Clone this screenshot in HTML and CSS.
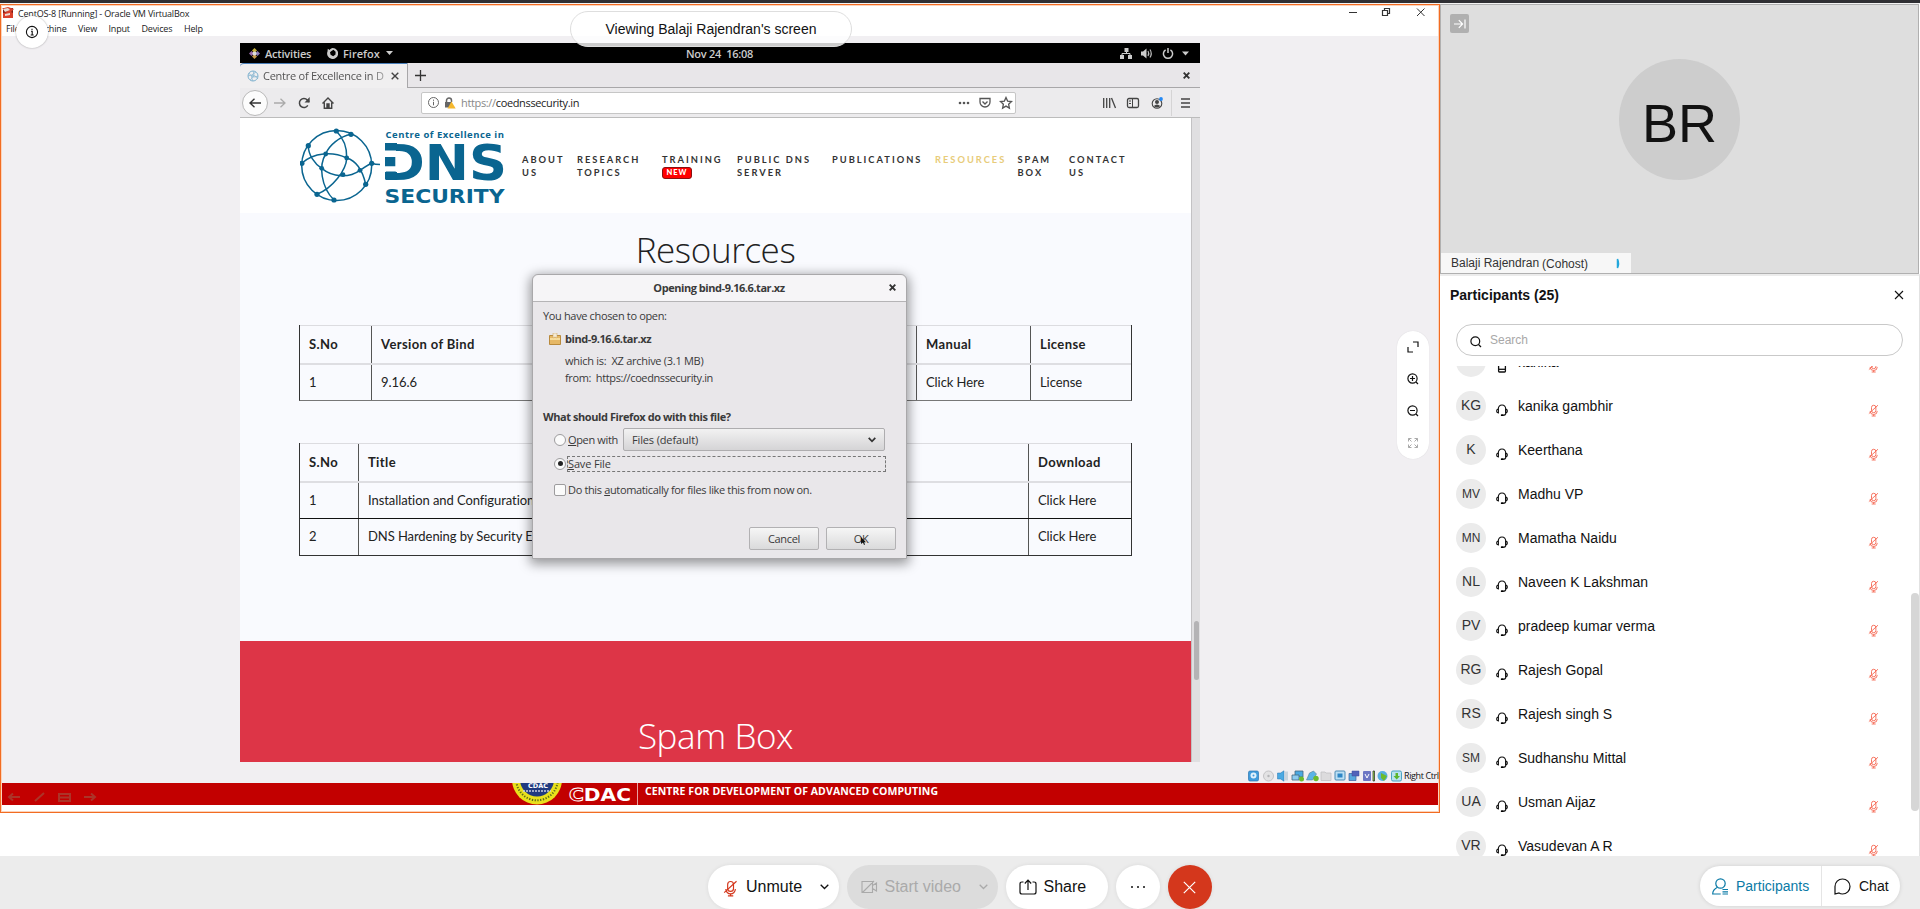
FILE: index.html
```html
<!DOCTYPE html>
<html lang="en">
<head>
<meta charset="utf-8">
<title>Meeting</title>
<link rel="stylesheet" href="styles.css">
</head>
<body>
<svg width="0" height="0" class="defs">
  <symbol id="mic" viewBox="0 0 12 14"><g fill="none" stroke="currentColor" stroke-width="1"><rect x="4" y="1" width="5" height="8.5" rx="2.5"/><path d="M2.4 7.5a4.1 4.1 0 0 0 8.2 0M6.5 11.500v1.800M4.200 13.300h4.600M1 10.500 11.600.8"/></g></symbol>
  <symbol id="headset" viewBox="0 0 12 13"><g fill="none" stroke="#111" stroke-width="1.100"><path d="M2.200 5.200C2.400 2.400 4 1 6 1s3.600 1.400 3.800 4.200v4c0 1.400-1 2-2.800 2"/><path d="M2.400 5C.9 5.200.6 6 .6 7s.6 1.900 1.800 1.900zM9.600 5c1.500.2 1.800 1 1.800 2s-.6 1.900-1.800 1.900z"/></g><rect x="4.800" y="10.200" width="2.800" height="1.900" rx=".9"/></symbol>
</svg>
<div class="topline"></div>
<main class="main">
  <section class="share">
    <div class="vb-head">
      <div class="vb-title">
        <svg width="12" height="12" viewBox="0 0 12 12"><path d="M1 1h10v10H1z" fill="#7c1a12"/><path d="M0 1.500 6 0l6 2-3 3 2 1v5H1V6l4-1z" fill="#d8402b"/><path d="m1 2 5-1 2 2-5 2zM3 7l5-1v2L3 9z" fill="#e9dcd6"/></svg>
        <span class="t">CentOS-8 [Running] - Oracle VM VirtualBox</span>
        <svg class="winctl" width="78" height="12" viewBox="0 0 78 12" fill="none" stroke="#333"><path d="M1 6.500h8"/><path d="M34.500 4.500h5v5h-5zM36.500 4.500v-2h5v5h-2" stroke-width="1.200"/><path d="m69 2.500 7.500 7.500m0-7.500L69 10"/></svg>
      </div>
      <div class="vb-menu"><span>File</span><span>Machine</span><span>View</span><span>Input</span><span>Devices</span><span>Help</span></div>
    </div>
    <div class="guest">
      <div class="gnome">
        <svg width="11" height="11" viewBox="0 0 11 11"><path d="M5.500 0 8 2.500 5.500 5 3 2.500z" fill="#c9b23d"/><path d="M11 5.500 8.500 8 6 5.500 8.500 3z" fill="#8d7bb8"/><path d="M5.500 11 3 8.500 5.500 6 8 8.500z" fill="#c99a4a"/><path d="M0 5.500 2.500 3 5 5.500 2.500 8z" fill="#9a6ca8"/><circle cx="5.500" cy="5.500" r="2" fill="#ddd"/></svg>
        <span class="t g-act">Activities</span>
        <svg width="11" height="11" viewBox="0 0 11 11"><path d="M5.800 0a5.500 5.500 0 1 1-5.300 3.500L.8.800l1.800 1.300C3.300 1 4.300.4 5.800 0zM4.500 3 3 4.200l.6 2.600 2.600 1.400 2.300-1.700.1-2.700L6.500 1.800z" fill="#ccc" fill-rule="evenodd"/></svg>
        <span class="t g-ff">Firefox</span>
        <svg width="7" height="4"><path d="M0 0h7L3.500 4z" fill="#ccc"/></svg>
        <span class="t g-time">Nov 24&nbsp; 16:08</span>
        <svg class="g-right" width="70" height="13" viewBox="0 0 70 13" fill="#ccc"><path d="M4.500 1h4v4h-4zM0 8h4v4H0zM8 8h4v4H8z"/><path d="M6.500 5v1.500M2 8.500v-2h8v2" fill="none" stroke="#ccc"/><path d="M21 4.500h2L26.500 1.500v10L23 8.500h-2z"/><path d="M28 4q1.500 2.500 0 5M30 2.500q2.500 4 0 8" fill="none" stroke="#bbb" stroke-width="1.200"/><path d="M45.600 2.800a4.600 4.600 0 1 0 4.800 0M48 1v5" fill="none" stroke="#ccc" stroke-width="1.500"/><path d="M62 4.500h7l-3.500 4z"/></svg>
      </div>
      <div class="tabs">
        <div class="tab">
          <svg width="12" height="12" viewBox="0 0 12 12" fill="none" stroke="#7fb2cf"><circle cx="6" cy="6" r="5"/><path d="M6 1q3 5-3 9M9 2Q2 5 6 11M1 6q6-3 10 3M2 3q3 6 9 3" stroke-width=".7"/></svg>
          <span class="t tabtext">Centre of Excellence in D</span>
          <svg width="8" height="8" stroke="#444" stroke-width="1.400"><path d="m.7.7 6.600 6.600m0-6.600L.7 7.300"/></svg>
        </div>
        <svg class="plus" width="11" height="11" stroke="#333" stroke-width="1.300"><path d="M5.500 0v11M0 5.500h11"/></svg>
        <svg class="winx" width="7" height="7" stroke="#333" stroke-width="1.900"><path d="m.7.7 5.600 5.600m0-5.600L.7 6.300"/></svg>
      </div>
      <div class="toolbar">
        <span class="back"><svg width="12" height="10" fill="none" stroke="#333" stroke-width="1.400"><path d="M12 5H1M5.500.7 1 5l4.500 4.300"/></svg></span>
        <svg class="fwd" width="12" height="10" fill="none" stroke="#aaa" stroke-width="1.300"><path d="M0 5h11M6.500.7 11 5 6.500 9.300"/></svg>
        <svg class="reload" width="12" height="12" fill="none" stroke="#444" stroke-width="1.500"><path d="M9.800 8.300A4.500 4.500 0 1 1 9.300 3L11 5"/><path d="M11.700 0v5.500H6.500z" fill="#444" stroke="none"/></svg>
        <svg class="home" width="12" height="12" fill="none" stroke="#444" stroke-width="1.400"><path d="m.5 6.500 5.500-5.500 5.500 5.500M2.300 5.500v5.700h7.400V5.500"/><path d="M5 11V7h2v4z" fill="#444"/></svg>
        <div class="url">
          <svg width="11" height="11" fill="none" stroke="#666"><circle cx="5.500" cy="5.500" r="5"/><path d="M5.500 4.800v3.500M5.500 2.600v1.200"/></svg>
          <svg class="lock" width="12" height="12"><path d="M2.500 5V3.500a2.500 2.500 0 0 1 5 0V5" fill="none" stroke="#666" stroke-width="1.500"/><path d="M1 5h6v5.500H1z" fill="#666"/><path d="m7.500 4.500 4.200 7H3.500z" fill="#f5b82e"/></svg>
          <span class="t urltext"><i>https://</i>coednssecurity.in</span>
          <svg class="url-r" width="60" height="14" fill="none" stroke="#555" stroke-width="1.300"><g fill="#555" stroke="none"><circle cx="2" cy="7" r="1.300"/><circle cx="6" cy="7" r="1.300"/><circle cx="10" cy="7" r="1.300"/></g><path d="M22 2.500h10v3.500a5 5 0 0 1-10 0zM24.500 5.500 27 8l2.500-2.500M48 1.500l1.600 3.600 3.900.4-2.900 2.700.8 3.900L48 10.100l-3.400 2 .8-3.900-2.900-2.700 3.900-.4z"/></svg>
        </div>
        <svg class="tb-r" width="90" height="26" fill="none" stroke="#444" stroke-width="1.300"><path d="M.7 8v10M3.700 8v10M6.700 8v10M8.500 8l4 10"/><rect x="24.500" y="8.500" width="11" height="9" rx="1.500"/><path d="M29.500 8.500v9M26 11h2M26 13.500h2" stroke-width="1"/><circle cx="54" cy="13.500" r="4.800" stroke-width="1.100"/><circle cx="54" cy="12" r="2" fill="#444" stroke="none"/><path d="M50.800 16q3.200-3 6.400 0-3.200 3-6.400 0z" fill="#444" stroke="none"/><circle cx="58" cy="9" r="1.900" fill="#2489f5" stroke="none"/><path d="M68.500 0v26" stroke="#d5d4d5" stroke-width="1"/><path d="M78 9h9M78 13h9M78 17h9"/></svg>
      </div>
      <div class="page">
        <div class="content">
          <header class="site">
            <svg class="logo" width="206" height="82" viewBox="300 126 206 82" fill="none" stroke="#0a6590">
              <circle cx="336.700" cy="165.500" r="35" stroke-width="1.500"/>
              <path stroke-width="1.500" d="M336.300 131c7 7 10.800 17 10.400 27-.3 12-14 30-29.700 36.300M351 134.300c-11 2-22 11-25.300 19.700-7 11-5 33 8.300 46M301.700 163.300c12-11 31-12 45-5.300 10 3 16 13 19 26.300M308.300 145.700c0 9 6 18 13.400 22.600 11 9 27 10 38.300 2 6-4 9-6 11.700-7 4 1.500 9 1.500 14 1"/>
              <g fill="#0a6590" stroke="none"><circle cx="336.300" cy="131" r="2.600"/><circle cx="351" cy="134.300" r="2.600"/><circle cx="308.300" cy="145.700" r="2.600"/><circle cx="301.900" cy="163.300" r="2.600"/><circle cx="325.700" cy="154" r="2.400"/><circle cx="346.700" cy="158" r="2.400"/><circle cx="321.700" cy="168.300" r="2.400"/><circle cx="360" cy="170.300" r="2.400"/><circle cx="371.700" cy="163.300" r="2.600"/><circle cx="343" cy="174.700" r="2.400"/><circle cx="365.700" cy="184.300" r="2.600"/><circle cx="317" cy="194.300" r="2.600"/><circle cx="334" cy="200" r="2.600"/>
              <text class="l1" x="385.500" y="137.500" textLength="118.500">Centre of Excellence in</text>
              <text class="l2" x="381" y="179.500" textLength="126" lengthAdjust="spacingAndGlyphs">DNS</text>
              <path fill="#fff" d="M380 150h16v21.500h-16z"/><path d="M385 157h10.300v9.300H385zM385 143h12v7.500h-12zM385 172h12v7.500h-12z"/>
              <text class="l3" x="384.500" y="203" textLength="120" lengthAdjust="spacingAndGlyphs">SECURITY</text></g>
            </svg>
            <nav class="nav"><a>ABOUT<br>US</a><a>RESEARCH<br>TOPICS</a><a>TRAINING<br><b>NEW</b></a><a>PUBLIC DNS<br>SERVER</a><a>PUBLICATIONS</a><a class="on">RESOURCES</a><a>SPAM<br>BOX</a><a>CONTACT<br>US</a></nav>
          </header>
          <section class="res">
            <h1>Resources</h1>
            <div class="tbl t1">
              <div class="row head"><div>S.No</div><div>Version of Bind</div><div>Manual</div><div>License</div></div>
              <div class="row"><div>1</div><div>9.16.6</div><div>Click Here</div><div>License</div></div>
            </div>
            <div class="tbl t2">
              <div class="row head"><div>S.No</div><div>Title</div><div>Download</div></div>
              <div class="row"><div>1</div><div>Installation and Configuration</div><div>Click Here</div></div>
              <div class="row"><div>2</div><div>DNS Hardening by Security Engineers</div><div>Click Here</div></div>
            </div>
          </section>
          <section class="spam"><h1>Spam Box</h1></section>
        </div>
        <div class="sb"><i></i></div>
      </div>
      <div class="dialog">
        <div class="d-title"><span>Opening bind-9.16.6.tar.xz</span><svg width="7" height="7" stroke="#333" stroke-width="1.900"><path d="m.7.7 5.600 5.600m0-5.600L.7 6.300"/></svg></div>
        <div class="d-body">
          <p>You have chosen to open:</p>
          <p class="p2"><svg width="12" height="12"><path d="M.5 2.500h11v9H.5z" fill="#e6b866" stroke="#b98a3c"/><path d="M1 6h10" stroke="#f6dc9c" stroke-width="2"/><path d="M4 0h4v5L6 4 4 5z" fill="#f3ead6" stroke="#c9a05a" stroke-width=".5"/></svg><b>bind-9.16.6.tar.xz</b></p>
          <p class="p3">which is:&nbsp; XZ archive (3.1 MB)</p>
          <p class="p4">from:&nbsp; https://coednssecurity.in</p>
          <p class="p5"><b>What should Firefox do with this file?</b></p>
          <div class="p6"><i class="radio"></i><span><u>O</u>pen with</span><div class="select"><span>Files (default)</span><svg width="8" height="6" fill="none" stroke="#333" stroke-width="1.700"><path d="m.7.8 3.300 3.500L7.300.8"/></svg></div></div>
          <div class="p7"><i class="radio sel"></i><div class="focus"><u>S</u>ave File</div></div>
          <div class="p8"><i class="check"></i><span>Do this <u>a</u>utomatically for files like this from now on.</span></div>
          <div class="p9"><div class="btn">Cancel</div><div class="btn">OK<svg class="cursor" width="8" height="10"><path d="M1 0v7l2-1.500L4 8l1-.5-1-2.300h2z" fill="#111"/></svg></div></div>
        </div>
      </div>
    </div>
    <div class="status">
      <svg width="156" height="12" viewBox="0 0 156 12">
        <rect x=".5" y="1" width="10" height="10" rx="1.500" fill="#3f9bdc" stroke="#2874b0" stroke-width=".7"/><circle cx="5.500" cy="5.500" r="3" fill="#dff0fb"/><circle cx="5.500" cy="5.500" r="1" fill="#3f9bdc"/>
        <circle cx="20.500" cy="6" r="5" fill="#e3e2e4" stroke="#c4c3c6"/><circle cx="20.500" cy="6" r="1.200" fill="#b5b5b8"/>
        <path d="M29.500 3h3L36 .8v10.400L32.500 9h-3z" fill="#4ba9e2" stroke="#2874b0" stroke-width=".5"/><path d="M37 1.500h3v9h-3z" fill="#c9d3dc"/>
        <path d="M47 1h8v6h-8z" fill="#4ba9e2" stroke="#44687f" stroke-width=".8"/><path d="M44 5h7v5h-7z" fill="#8ccbf0" stroke="#44687f" stroke-width=".8"/><circle cx="53.500" cy="9" r="2.500" fill="#6dbb2d"/>
        <path d="m58.500 10 3-7 4-2 3 3-4 6z" fill="#5bb4e6" stroke="#5a7f97" stroke-width=".6"/><circle cx="68" cy="8.500" r="2.700" fill="#6dbb2d"/>
        <path d="M73 2h4l1 1h5v7.500H73z" fill="#dcdbdd" stroke="#c2c1c4" stroke-width=".8"/>
        <rect x="87" y="1" width="10" height="9" rx="1" fill="#bcdff4" stroke="#4a8ab4"/><path d="M89.500 3.500h5v4h-5z" fill="#2d86c6"/>
        <path d="M101 3.500h7v7h-7z" fill="#58a9dd" stroke="#3c5e9e" stroke-width=".7"/><path d="M104 1h7v5h-7z" fill="#5263b9" stroke="#3c4e9e" stroke-width=".5"/>
        <rect x="115" y="1" width="8" height="10" rx="1" fill="#6d76c4"/><path d="m117 4 2 4 2-4" stroke="#fff" fill="none"/><path d="M125 1h1.500v10H125z" fill="#9be04c" stroke="#222" stroke-width=".7"/>
        <circle cx="134.500" cy="6" r="5" fill="#58aee0"/><path d="m133 3 6 3-3 5-3-3z" fill="#6dbb2d"/>
        <rect x="143.500" y="1" width="10" height="10" rx="1.500" fill="#b8e2ee" stroke="#4aa3c4"/><path d="M147.500 3h2.500v3h2l-3.300 3.500L145.500 6h2z" fill="#5cb52c"/>
      </svg>
      <span>Right Ctrl</span>
    </div>
    <div class="cdac">
      <svg class="tools" width="90" height="12" fill="none" stroke="#a34a3a" stroke-width="2" opacity=".7"><path d="M13 6H3M6 2.500 2 6l4 3.500M28 10l9-8M52 3h11v7H52zM52 6.500h11M77 6h10M84 2.500 88 6l-4 3.500"/></svg>
      <svg class="emblem" width="52" height="22" viewBox="0 0 52 22"><circle cx="26" cy="-3.500" r="25" fill="#e9e01c"/><circle cx="26" cy="-3.500" r="20.800" fill="none" stroke="#5c6b1a" stroke-width="2" stroke-dasharray="1.300 1.500"/><circle cx="26" cy="-3.500" r="17" fill="#213a80"/><text x="17" y="5" class="e1">CDAC</text><path d="M12 8h28" stroke="#c8cbe0" stroke-width="1.500" stroke-dasharray="2 1"/></svg>
      <svg class="cd" width="66" height="18"><text x="2" y="15" textLength="62" lengthAdjust="spacingAndGlyphs"><tspan class="c0">C</tspan>DAC</text></svg>
      <span class="t cdtext">CENTRE FOR DEVELOPMENT OF ADVANCED COMPUTING</span>
    </div>
    <div class="viewing">Viewing Balaji Rajendran's screen</div>
    <div class="info"><svg width="14" height="14" fill="none" stroke="#111" stroke-width="1.100"><circle cx="7" cy="7" r="5.600"/><path d="M6 6.200h1.200V10M5.700 10h3M7 3.700v1.200"/></svg></div>
    <div class="zoomer">
      <svg width="12" height="12" fill="none" stroke="#111" stroke-width="1.200"><path d="M6 1h5v5M1 6v5h5"/></svg>
      <svg width="12" height="12" fill="none" stroke="#111" stroke-width="1.200"><circle cx="5.500" cy="5.500" r="4.600"/><path d="M3 5.500h5M5.500 3v5M9 9l2 2"/></svg>
      <svg width="12" height="12" fill="none" stroke="#111" stroke-width="1.200"><circle cx="5.500" cy="5.500" r="4.600"/><path d="M3 5.500h5M9 9l2 2"/></svg>
      <svg width="12" height="12" fill="none" stroke="#aaa"><path d="M1.500 4.500v-3h3M1.500 1.500l3 3M7.500 1.500h3v3M10.500 1.500l-3 3M1.500 7.500v3h3M1.500 10.500l3-3M10.500 7.500v3h-3M10.500 10.500l-3-3"/></svg>
    </div>
  </section>
  <aside class="side">
    <div class="tile">
      <span class="collapse"><svg width="12" height="10" fill="none" stroke="#fff" stroke-width="1.200"><path d="M0 5h8.500M4.800 1.200 8.600 5 4.800 8.800M11 .5v9"/></svg></span>
      <div class="big">BR</div>
      <div class="who"><span>Balaji Rajendran</span><em>(Cohost)</em><svg width="5" height="11"><path d="M1.500 1q2 4.500 0 9z" fill="#22a7dc" stroke="#22a7dc" stroke-width="1.500"/></svg></div>
    </div>
    <div class="panel">
      <div class="p-head"><b>Participants (25)</b><svg width="10" height="10" stroke="#111" stroke-width="1.100"><path d="m1 1 8 8m0-8L1 9"/></svg></div>
      <div class="search"><svg width="12" height="12" fill="none" stroke="#111" stroke-width="1.200"><circle cx="5.300" cy="5.300" r="4.400"/><path d="m8.500 8.500 2.500 2.500"/></svg>Search</div>
      <div class="list">
        <div class="scroll">
          <div class="pt"><i></i><svg width="10" height="13" viewBox="0 0 10 13" fill="none" stroke="#111" stroke-width="1.300"><rect x="1.600" y="1" width="6.800" height="11" rx=".8"/><path d="M1.600 9.300h6.800"/></svg><span>kanika</span><svg class="m"><use href="#mic"/></svg></div>
          <div class="pt"><i>KG</i><svg><use href="#headset"/></svg><span>kanika gambhir</span><svg class="m"><use href="#mic"/></svg></div>
          <div class="pt"><i>K</i><svg><use href="#headset"/></svg><span>Keerthana</span><svg class="m"><use href="#mic"/></svg></div>
          <div class="pt"><i class="s">MV</i><svg><use href="#headset"/></svg><span>Madhu VP</span><svg class="m"><use href="#mic"/></svg></div>
          <div class="pt"><i class="s">MN</i><svg><use href="#headset"/></svg><span>Mamatha Naidu</span><svg class="m"><use href="#mic"/></svg></div>
          <div class="pt"><i>NL</i><svg><use href="#headset"/></svg><span>Naveen K Lakshman</span><svg class="m"><use href="#mic"/></svg></div>
          <div class="pt"><i>PV</i><svg><use href="#headset"/></svg><span>pradeep kumar verma</span><svg class="m"><use href="#mic"/></svg></div>
          <div class="pt"><i>RG</i><svg><use href="#headset"/></svg><span>Rajesh Gopal</span><svg class="m"><use href="#mic"/></svg></div>
          <div class="pt"><i>RS</i><svg><use href="#headset"/></svg><span>Rajesh singh S</span><svg class="m"><use href="#mic"/></svg></div>
          <div class="pt"><i class="s">SM</i><svg><use href="#headset"/></svg><span>Sudhanshu Mittal</span><svg class="m"><use href="#mic"/></svg></div>
          <div class="pt"><i>UA</i><svg><use href="#headset"/></svg><span>Usman Aijaz</span><svg class="m"><use href="#mic"/></svg></div>
          <div class="pt"><i>VR</i><svg><use href="#headset"/></svg><span>Vasudevan A R</span><svg class="m"><use href="#mic"/></svg></div>
        </div>
        <div class="thumb"></div>
      </div>
    </div>
  </aside>
</main>
<footer class="bar">
  <div class="ctl">
    <div class="pill unmute"><svg class="mi"><use href="#mic"/></svg><span>Unmute</span><svg class="chev" width="9" height="6" fill="none" stroke="#111" stroke-width="1.300"><path d="m.7.7 3.800 3.800L8.300.7"/></svg></div>
    <div class="pill video"><svg class="cam" width="17" height="14" fill="none" stroke="#aaa" stroke-width="1.100"><path d="M1 1.500h10.500V12.500H1zM1.500 12.500 13 1M11.500 5.500l4-2.500v8l-4-2.500"/></svg><span>Start video</span><svg class="chev" width="9" height="6" fill="none" stroke="#aaa" stroke-width="1.300"><path d="m.7.7 3.800 3.800L8.300.7"/></svg></div>
    <div class="pill sharebtn"><svg width="18" height="16" fill="none" stroke="#111" stroke-width="1.200"><path d="M4.500 3H3Q1 3 1 5v8q0 2 2 2h12q2 0 2-2V5q0-2-2-2h-1.500M9 11V1.500M5.800 4.500 9 1.200l3.200 3.300"/></svg><span>Share</span></div>
    <div class="pill round"><svg width="16" height="4" fill="#111"><circle cx="2" cy="2" r="1"/><circle cx="8" cy="2" r="1"/><circle cx="14" cy="2" r="1"/></svg></div>
    <div class="pill round end"><svg width="13" height="13" stroke="#fff" stroke-width="1.200"><path d="m.8.8 11.400 11.400m0-11.400L.8 12.200"/></svg></div>
  </div>
  <div class="tabsr">
    <div class="pp"><svg width="16" height="17" fill="none" stroke="#0a7aa6" stroke-width="1.200"><circle cx="8.500" cy="5.500" r="4.700"/><path d="M5.500 9.200Q.7 11.500.7 16h8M10.500 11.500h5.500M10.500 13.800h5.500M10.500 16h5.500"/></svg><span>Participants</span></div>
    <div class="ch"><svg width="17" height="17" fill="none" stroke="#111" stroke-width="1.200"><path d="M1 16V8.500A7.500 7.500 0 1 1 8.500 16q-2 0-3.500-1z"/></svg><span>Chat</span></div>
  </div>
</footer>
</body>
</html>
```
FILE: styles.css
```css
* { box-sizing: border-box; }
body { margin: 0; width: 1920px; height: 909px; overflow: hidden; background: #fff; font-family: "Liberation Sans", Arial, sans-serif; color: #121212; display: flex; flex-direction: column; }
svg { flex: none; display: block; }
p, h1 { margin: 0; font-weight: normal; }
.defs { position: absolute; }
.t { white-space: nowrap; }
.topline { height: 4px; background: #2f2f33; border-bottom: 1px solid #f4f4f4; flex: none; }
.main { height: 852px; display: grid; grid-template-columns: 1440px 480px; flex: none; }

/* shared screen */
.share { position: relative; height: 809px; border: 1px solid #f26c22; box-shadow: inset 0 0 0 1px #fbd3bb; background: #fff; overflow: hidden; display: flex; flex-direction: column; }
.share > * { position: relative; }
.share::before { content: ""; position: absolute; left: 1px; right: 1px; top: 31px; height: 747px; background: #f1eff2; }
.vb-head { height: 31px; font: 9px "Open Sans", sans-serif; color: #222; margin: 1px 1px 0; letter-spacing: -.18px; }
.vb-title { height: 14px; display: flex; align-items: center; gap: 4px; }
.winctl { margin-left: auto; margin-right: 12px; margin-top: -3px; }
.vb-menu { display: grid; grid-template-columns: 26px 46px 30.500px 33px 42.500px 40px; padding-left: 4px; line-height: 17px; }
.guest { position: relative; width: 960px; height: 719px; margin-left: 239px; margin-top: 6px; flex: none; font-family: "Open Sans", sans-serif; }
.gnome { height: 20px; background: #000; color: #ccc; display: flex; align-items: center; font-size: 11px; font-weight: 600; padding: 0 10px 0 9px; }
.g-act { margin-left: 5px; width: 62px; letter-spacing: -.2px; }
.g-ff { margin-left: 5px; width: 43px; }
.g-time { margin-left: 293px; letter-spacing: -.27px; }
.g-right { margin-left: auto; }
.tabs { height: 25px; background: #e8e6e9; display: flex; align-items: center; border-bottom: 1px solid #a8a7a9; }
.tab { width: 168px; height: 25px; background: #f0eff0; border-top: 1px solid #4a80bb; border-right: 1px solid #a8a7a9; border-radius: 4px 0 0 0; display: flex; align-items: center; padding-left: 7px; font-size: 11px; color: #555; }
.tabtext { margin-left: 4px; width: 128px; letter-spacing: -.25px; -webkit-mask-image: linear-gradient(90deg, #000 84%, transparent 104%); }
.plus { margin-left: 7px; }
.winx { margin-left: auto; margin-right: 10px; }
.toolbar { height: 30px; background: #ecebed; border-bottom: 1px solid #bcbcbc; display: flex; align-items: center; padding-left: 2px; }
.back { width: 26px; height: 26px; border-radius: 50%; border: 1px solid #b9b9b9; background: #fcfcfc; display: grid; place-items: center; }
.fwd { margin-left: 6px; }
.reload { margin-left: 12px; }
.home { margin-left: 12px; }
.url { margin-left: 87px; width: 595px; height: 22px; border: 1px solid #c6c6c6; border-radius: 2px; background: #fff; display: flex; align-items: center; padding-left: 6px; font-size: 11px; color: #222; }
.url i { font-style: normal; color: #888; }
.lock { margin-left: 5px; }
.urltext { margin-left: 5px; letter-spacing: -.35px; }
.url-r { margin-left: auto; margin-right: -3px; }
.tb-r { margin-left: 87px; }

/* web page inside the guest browser */
.page { height: 644px; display: grid; grid-template-columns: 951px 9px; }
.sb { background: #e0dfe1; border-left: 1px solid #c3c2c4; padding: 503px 1px 0 2px; }
.sb i { display: block; height: 59px; background: #b4b3b5; border-radius: 3px; width: 5px; }
.site { height: 95px; background: #fff; display: flex; }
.logo { margin: 8px 0 0 60px; }
.logo .l1 { font: 700 9.500px "Open Sans"; }
.logo .l2 { font: 700 50px "DejaVu Sans"; }
.logo .l3 { font: 700 19.500px "DejaVu Sans"; }
.nav { display: grid; grid-template-columns: 55px 85px 75px 95px 103px 82.500px 51.500px 80px; margin-left: 16px; padding-top: 34.500px; font: 700 9.300px/13.500px Lato, sans-serif; letter-spacing: 2px; color: #333; white-space: nowrap; }
.nav .on { color: #e8cc7a; }
.nav b { display: block; width: 30px; height: 12px; background: #f00; border: 1px solid #811; border-radius: 3px; color: #fff; font-size: 7.500px; line-height: 10px; letter-spacing: 1px; text-align: center; margin-top: .5px; }
.res { height: 428px; background: #f9fafe; padding: 13px 59px 0; color: #222; }
h1 { font: 300 35px/48px "Open Sans"; text-align: center; letter-spacing: -.4px; }
.tbl { width: 833px; border: solid #333; border-width: 0 1px 1px; font: 13px Lato, sans-serif; letter-spacing: -.07px; }
.t1 { margin-top: 51px; border-bottom: 1px solid #777; }
.t2 { margin-top: 42px; }
.row { display: grid; height: 37px; line-height: 34px; border-top: 2px solid #dedee2; overflow: hidden; }
.row.head { border-top: 1px solid #dcdce0; font-weight: 700; height: 38px; line-height: 37px; letter-spacing: .38px; }
.t2 .row:last-child { border-top: 1px solid #111; }
.row > div { padding-left: 9px; border-left: 1px solid #555; white-space: nowrap; overflow: hidden; }
.row > div:first-child { border-left: 0; }
.t1 .row { grid-template-columns: 71px 545px 114px 1fr; }
.t2 .row { grid-template-columns: 58px 670px 1fr; }
.spam { height: 121px; background: #dd3547; color: #fff; padding-top: 71px; }

/* download dialog */
.dialog { position: absolute; left: 292px; top: 231px; width: 375px; height: 285px; background: #e9e7ea; border: 1px solid #a9a8aa; border-radius: 6px 6px 0 0; box-shadow: 0 3px 12px 2px rgba(0,0,0,.4); font-size: 11px; color: #3a3a3a; white-space: nowrap; letter-spacing: -.35px; }
.dialog b { letter-spacing: -.43px; }
.d-title { height: 27px; border-bottom: 1px solid #b5b4b6; background: #f6f5f7; border-radius: 6px 6px 0 0; font-weight: 700; display: grid; grid-template-columns: 1fr 8px; align-items: center; padding: 0 9px 1px 16px; text-align: center; letter-spacing: -.45px; }
.d-body { padding: 6px 10px 0; line-height: 16px; display: flex; flex-direction: column; }
.p2 { display: flex; gap: 4px; padding-left: 6px; margin-top: 7px; align-items: center; height: 16px; }
.p3 { padding-left: 22px; margin-top: 6px; letter-spacing: -.28px; }
.p4 { padding-left: 22px; margin-top: 1px; letter-spacing: -.39px; }
.p5 { margin-top: 23px; }
.p6, .p7, .p8 { display: flex; align-items: center; padding-left: 11px; gap: 2px; }
.p6 { height: 23px; margin-top: 3px; }
.p7 { height: 17px; margin-top: 4px; gap: 1px; letter-spacing: -.15px; }
.p8 { height: 16px; margin-top: 10px; }
.radio, .check { width: 12px; height: 12px; border: 1px solid #9d9c9e; border-radius: 50%; background: #fbfbfb; display: grid; place-items: center; flex: none; }
.check { border-radius: 2px; }
.sel::after { content: ""; width: 5px; height: 5px; border-radius: 50%; background: #222; }
.select { margin-left: auto; margin-right: 11px; width: 262px; height: 23px; border: 1px solid #aeadaf; border-radius: 2px; background: linear-gradient(#f2f2f2, #d5d4d6); display: flex; align-items: center; justify-content: space-between; padding: 0 8px; letter-spacing: -.14px; }
.focus { width: 319px; height: 16px; border: 1px dashed #777; line-height: 14px; }
.p9 { display: flex; justify-content: flex-end; gap: 7px; margin-top: 29px; }
.btn { position: relative; width: 70px; height: 23px; border: 1px solid #b2b1b3; border-radius: 2px; background: linear-gradient(#f6f6f6, #dadadb); text-align: center; line-height: 21px; }
.cursor { position: absolute; left: 33px; top: 9px; }

/* status row and banner under the guest screen */
.status { height: 21px; display: flex; align-items: center; padding: 6px 0 0 1247px; font: 9px "Open Sans"; letter-spacing: -.4px; white-space: nowrap; }
.cdac { height: 22px; background: #c20000; display: flex; margin: 0 1px; flex: none; }
.tools { margin: 8px 0 0 5px; }
.emblem { margin-left: 414px; }
.e1 { font: 700 6.500px "DejaVu Sans"; fill: #fff; }
.cd { margin: 3px 0 0 4px; overflow: visible; }
.cd text { font: 700 18px "DejaVu Sans"; fill: #fff; }
.cd .c0 { fill: #c20000; stroke: #fff; stroke-width: 1px; }
.cdtext { border-left: 1px solid #e8a0a0; margin-left: 4px; padding-left: 7px; color: #fff; font: 700 10.500px/16px "Open Sans"; letter-spacing: .08px; }

/* floating controls over the shared screen */
.share > .viewing { position: absolute; left: 569px; top: 6px; width: 282px; height: 36px; border-radius: 18px; background: rgba(255,255,255,.8); border: 1px solid #dedede; text-align: center; font-size: 14px; line-height: 35px; }
.share > .info { position: absolute; left: 15px; top: 11px; width: 32px; height: 32px; border-radius: 50%; background: #fff; box-shadow: 0 0 2px rgba(0,0,0,.35); display: grid; place-items: center; }
.share > .zoomer { position: absolute; left: 1396px; top: 326px; width: 32px; height: 128px; border-radius: 16px; background: #fff; box-shadow: 0 0 1px rgba(0,0,0,.15); display: grid; place-items: center; }

/* speaker tile and participants */
.tile { position: relative; height: 270px; width: 479px; background: #dedede; border: 1px solid #b0b0b0; display: grid; justify-content: center; padding-top: 54px; }
.collapse { position: absolute; left: 9px; top: 9px; width: 19px; height: 19px; border-radius: 2px; background: #b0b0b0; display: grid; place-items: center; }
.big { width: 121px; height: 121px; border-radius: 50%; background: #cdcdcd; font-size: 54px; line-height: 128px; text-align: center; }
.who { position: absolute; left: 0; bottom: 0; width: 190px; height: 20px; background: #f7f7f7; font-size: 12px; line-height: 19px; padding-left: 10px; display: flex; align-items: center; color: #333; }
.who em { font-style: normal; margin-left: 3px; margin-top: 2px; }
.who svg { margin-left: auto; margin-right: 10px; }
.panel { height: 582px; border-top: 2px solid #ececec; border-right: 1px solid #e2e2e2; }
.p-head { height: 48px; display: flex; justify-content: space-between; padding: 11px 15px 0 10px; font-size: 14px; }
.p-head svg { margin-top: 3px; }
.search { margin: 0 16px; width: 447px; height: 32px; border: 1px solid #c9c9c9; border-radius: 16px; display: flex; align-items: center; gap: 8px; padding-left: 13px; font-size: 12px; color: #a8a8a8; }
.search svg { margin-top: 3px; }
.list { position: relative; height: 490px; margin-top: 10px; overflow: hidden; }
.scroll { margin-top: -26px; padding-left: 16px; }
.pt { height: 44px; display: flex; align-items: center; font-size: 14px; }
.pt i { width: 30px; height: 30px; border-radius: 50%; background: #ebebeb; font-style: normal; line-height: 29px; text-align: center; color: #333; flex: none; }
.pt i.s { font-size: 12px; line-height: 31px; }
.pt svg { width: 12px; height: 13px; margin: 8px 10px 0; }
.pt .m { margin: 9px 0 0 auto; margin-right: 41px; width: 10.500px; height: 13px; color: #f5624d; }
.thumb { position: absolute; right: 0; top: 227px; width: 8px; height: 218px; border-radius: 4px; background: #d6d6d6; }

/* bottom control bar */
.bar { height: 53px; background: #ececec; flex: none; display: flex; justify-content: space-between; padding: 9px 20px 0 708px; }
.ctl { display: flex; gap: 8px; }
.pill { height: 44px; border-radius: 22px; background: #fff; display: flex; align-items: center; font-size: 16px; box-shadow: 0 0 4px rgba(0,0,0,.08); }
.unmute { width: 130.500px; padding-left: 15px; }
.mi { width: 14px; height: 17px; color: #d4371c; margin: 2px 9px 0 0; }
.pill .chev { margin-left: auto; margin-right: 10px; }
.video { width: 151px; background: #dcdcdc; color: #aaa; box-shadow: none; padding-left: 14px; }
.cam { margin-right: 7px; }
.sharebtn { width: 102px; padding-left: 13px; }
.sharebtn svg { margin-right: 7px; }
.round { width: 44px; justify-content: center; }
.end { background: #d4371c; }
.tabsr { width: 200px; height: 40px; margin-top: 1px; border-radius: 20px; background: #fff; box-shadow: 0 0 4px rgba(0,0,0,.12); display: grid; grid-template-columns: 121px 79px; font-size: 14px; }
.pp, .ch { display: flex; align-items: center; gap: 8px; padding-left: 12px; }
.pp { color: #0a7aa6; }
.ch { border-left: 1px solid #e5e5e5; }
```
